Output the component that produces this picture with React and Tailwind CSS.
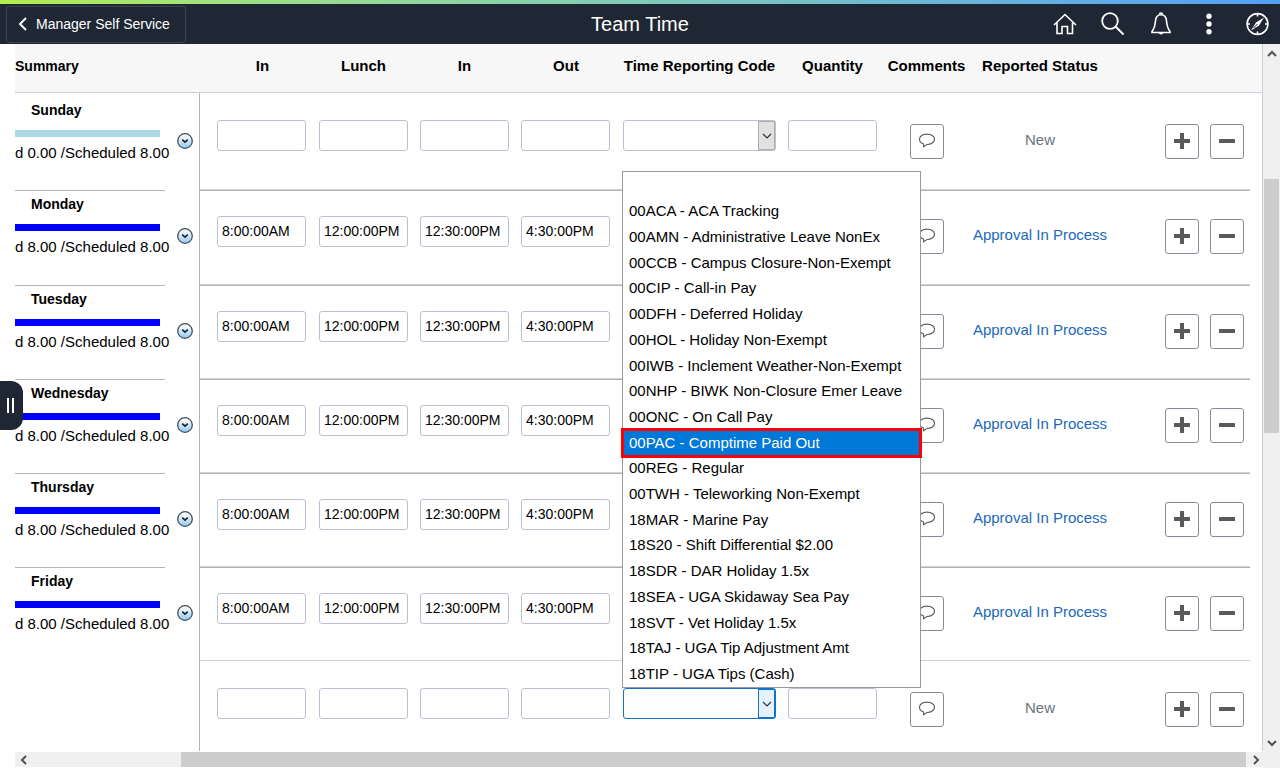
import { useState } from 'react';
import clsx from 'clsx';

const DAYS = [
  { day: 'Sunday', reported: 'd 0.00 /Scheduled 8.00', bar: 'bg-[#add8e6]', height: 'h-[98px]', times: ['', '', '', ''], status: 'New', roomy: true },
  { day: 'Monday', reported: 'd 8.00 /Scheduled 8.00', bar: 'bg-[#0000ff]', height: 'h-[95px]', times: ['8:00:00AM', '12:00:00PM', '12:30:00PM', '4:30:00PM'], status: 'Approval In Process' },
  { day: 'Tuesday', reported: 'd 8.00 /Scheduled 8.00', bar: 'bg-[#0000ff]', height: 'h-[94px]', times: ['8:00:00AM', '12:00:00PM', '12:30:00PM', '4:30:00PM'], status: 'Approval In Process' },
  { day: 'Wednesday', reported: 'd 8.00 /Scheduled 8.00', bar: 'bg-[#0000ff]', height: 'h-[94px]', times: ['8:00:00AM', '12:00:00PM', '12:30:00PM', '4:30:00PM'], status: 'Approval In Process' },
  { day: 'Thursday', reported: 'd 8.00 /Scheduled 8.00', bar: 'bg-[#0000ff]', height: 'h-[94px]', times: ['8:00:00AM', '12:00:00PM', '12:30:00PM', '4:30:00PM'], status: 'Approval In Process' },
  { day: 'Friday', reported: 'd 8.00 /Scheduled 8.00', bar: 'bg-[#0000ff]', height: 'h-[93px]', times: ['8:00:00AM', '12:00:00PM', '12:30:00PM', '4:30:00PM'], status: 'Approval In Process', lastOfWeek: true },
  { day: '', height: 'h-[90px]', times: ['', '', '', ''], status: 'New', roomy: true, open: true },
];

const CODES = [
  '',
  '00ACA - ACA Tracking',
  '00AMN - Administrative Leave NonEx',
  '00CCB - Campus Closure-Non-Exempt',
  '00CIP - Call-in Pay',
  '00DFH - Deferred Holiday',
  '00HOL - Holiday Non-Exempt',
  '00IWB - Inclement Weather-Non-Exempt',
  '00NHP - BIWK Non-Closure Emer Leave',
  '00ONC - On Call Pay',
  '00PAC - Comptime Paid Out',
  '00REG - Regular',
  '00TWH - Teleworking Non-Exempt',
  '18MAR - Marine Pay',
  '18S20 - Shift Differential $2.00',
  '18SDR - DAR Holiday 1.5x',
  '18SEA - UGA Skidaway Sea Pay',
  '18SVT - Vet Holiday 1.5x',
  '18TAJ - UGA Tip Adjustment Amt',
  '18TIP - UGA Tips (Cash)',
];

const PUNCHES = ['In', 'Lunch', 'In', 'Out'];

function Chevron({ className, d, width = 2 }) {
  return (
    <svg className={className} viewBox="0 0 10 10" fill="none" stroke="currentColor" strokeWidth={width}>
      <path d={d} />
    </svg>
  );
}

function TopBar() {
  return (
    <header className="shrink-0">
      <div className="h-1 bg-gradient-to-r from-[#b3ec50] to-[#549ff7]"></div>
      <div className="grid h-10 grid-cols-[1fr_auto_1fr] items-center bg-[#1e2733] text-white">
        <button className="ml-1.5 flex h-[37px] w-[180px] items-center gap-[9px] rounded-[3px] border border-[#3d4651] pl-[11px] text-sm">
          <svg className="h-4 w-[9px]" viewBox="0 0 9 16" fill="none" stroke="currentColor" strokeWidth="2">
            <path d="M8 2 2 8l6 6" />
          </svg>
          Manager Self Service
        </button>
        <h1 className="text-xl">Team Time</h1>
        <nav className="flex items-center justify-end gap-6 pr-[11px]">
          <button aria-label="Home">
            <svg className="size-6" viewBox="0 0 24 24" fill="none" stroke="currentColor" strokeWidth="1.6">
              <path d="M1 13 12 2.500 23 13M4 10.500V21.500h5v-7h5.500v7h5V10.500" />
            </svg>
          </button>
          <button aria-label="Search">
            <svg className="size-6" viewBox="0 0 24 24" fill="none" stroke="currentColor" strokeWidth="1.8">
              <circle cx="9" cy="9" r="7.800" />
              <path d="m14.500 14.500 8 8" strokeWidth="2" />
            </svg>
          </button>
          <button aria-label="Notifications">
            <svg className="size-6" viewBox="0 0 24 24" fill="none" stroke="currentColor" strokeWidth="1.600">
              <path d="M12 2.800c-3.600 0-5.200 2.600-5.500 6-.3 4-.6 7-3.500 10.700V20.500h18v-1c-2.900-3.700-3.200-6.700-3.500-10.700-.3-3.400-1.900-6-5.500-6Z" />
              <path d="M10.500 2.500a1.500 1.500 0 0 1 3 0M10.300 20.500a1.800 1.800 0 0 0 3.400 0" />
            </svg>
          </button>
          <button aria-label="Actions">
            <svg className="size-6" viewBox="0 0 24 24" fill="currentColor">
              <circle cx="12" cy="4.200" r="2.700" />
              <circle cx="12" cy="12" r="2.700" />
              <circle cx="12" cy="19.800" r="2.700" />
            </svg>
          </button>
          <button aria-label="NavBar">
            <svg className="size-6" viewBox="0 0 24 24" fill="none" stroke="currentColor" strokeWidth="1.600">
              <circle cx="12.500" cy="12" r="10.400" />
              <path d="M12.500 2v2.500M12.500 19.500v2.500M2.500 12H5M20 12h2.500" />
              <path d="m19 5.500-5 8L6 18.500l5-8Z" fill="currentColor" stroke="none" />
              <path d="m12.500 12-4 4" stroke="#1e2733" strokeWidth="1" />
            </svg>
          </button>
        </nav>
      </div>
    </header>
  );
}

function TextBox({ label, value }) {
  return (
    <input
      type="text"
      aria-label={label}
      defaultValue={value}
      className="h-[31px] w-[89px] rounded-[3px] border border-[#b9c2ce] bg-white px-1 pb-px text-sm text-black"
    />
  );
}

function CodeSelect({ open }) {
  const [code, setCode] = useState('');

  return (
    <div className="relative w-[153px]">
      <select
        aria-label="Time Reporting Code"
        value={code}
        onChange={(e) => setCode(e.target.value)}
        className={clsx(
          'block h-[31px] w-full appearance-none rounded-[3px] border bg-white px-1 text-sm',
          open ? 'border-[#1a6fc4]' : 'border-[#b9c2ce]'
        )}
      >
        {CODES.map((c) => (
          <option key={c} value={c}>{c}</option>
        ))}
      </select>
      <span
        className={clsx(
          'pointer-events-none absolute inset-y-px right-px flex w-[17px] items-center justify-center border text-[#333]',
          open ? 'border-[#0078d7] bg-[#e5f1fb]' : 'border-[#adadad] bg-[#e1e1e1]'
        )}
      >
        <Chevron className="size-2.5" d="m1 3 4 4 4-4" width={1.2} />
      </span>
      {open && (
        <ul
          role="listbox"
          aria-label="Time Reporting Code options"
          className="absolute bottom-full -left-px z-10 flex h-[517px] w-[299px] flex-col border border-[#999] bg-white pt-px text-[15px]"
        >
          {CODES.map((c) => (
            <li
              key={c}
              role="option"
              aria-selected={c.startsWith('00PAC')}
              onClick={() => setCode(c)}
              className={clsx(
                'flex flex-1 items-center px-1.5 whitespace-nowrap',
                c.startsWith('00PAC') && 'bg-[#0078d7] text-white outline-3 -outline-offset-1 outline-[#ff0000]'
              )}
            >
              {c}
            </li>
          ))}
        </ul>
      )}
    </div>
  );
}

function SquareButton({ label, children }) {
  return (
    <button
      aria-label={label}
      className="flex h-[35px] w-[34px] items-center justify-center rounded-[3px] border border-[#868d96] bg-white pb-px text-[#5a5a5a]"
    >
      {children}
    </button>
  );
}

function DayRow({ row }) {
  const line = row.open
    ? ''
    : row.lastOfWeek
      ? 'border-b border-[#c8cfda]'
      : 'border-b border-[#b4b4b4] shadow-[inset_0_-1px_0_#d0d4da]';
  const fieldPad = row.roomy ? 'pt-[27px]' : 'pt-[25px]';
  const buttonPad = row.roomy ? 'pt-[31px]' : 'pt-7';

  return (
    <tr className={clsx(row.height, 'align-top')}>
      <th
        scope="row"
        className={clsx(
          'text-left font-normal',
          row.roomy ? 'pt-[7px]' : 'pt-[3px]',
          row.day && !row.lastOfWeek && 'border-b border-[#b4b4b4]'
        )}
      >
        {row.day && (
          <>
            <div className="pl-4 text-sm leading-5 font-bold">{row.day}</div>
            <div className={clsx('mt-2.5 h-[7px] w-[145px]', row.bar)}></div>
            <div className="mt-1.5 text-[15px] leading-5 whitespace-nowrap">{row.reported}</div>
          </>
        )}
      </th>
      <td className={clsx('border-r border-[#b4b4b4] pl-3', row.roomy ? 'pt-10' : 'pt-[37px]')}>
        {row.day && (
          <button aria-label={`${row.day} details`} className="block">
            <svg className="size-4" viewBox="0 0 16 16">
              <defs>
                <linearGradient id={`disc-${row.day}`} x1="0" y1="0" x2="0" y2="1">
                  <stop offset="0.2" stopColor="#f4faff" />
                  <stop offset="1" stopColor="#8cc8fa" />
                </linearGradient>
              </defs>
              <circle cx="8" cy="8" r="7.300" fill={`url(#disc-${row.day})`} stroke="#4a4f55" strokeWidth="1.300" />
              <path d="m5.200 6.700 2.800 2.500 2.800-2.500" fill="none" stroke="#222" strokeWidth="1.700" />
            </svg>
          </button>
        )}
      </td>
      {row.times.map((t, i) => (
        <td key={i} className={clsx(line, fieldPad, i === 0 ? 'pl-[17px]' : 'pl-1.5')}>
          <TextBox label={`${row.day} ${PUNCHES[i]}`} value={t} />
        </td>
      ))}
      <td className={clsx(line, fieldPad, 'pl-1.5')}>
        <CodeSelect open={row.open} />
      </td>
      <td className={clsx(line, fieldPad, 'pl-1.5')}>
        <TextBox label={`${row.day} Quantity`} value="" />
      </td>
      <td className={clsx(line, buttonPad, 'pl-[27px]')}>
        <SquareButton label="Comments">
          <svg className="size-4" viewBox="0 0 16 16" fill="none" stroke="currentColor" strokeWidth="1.100">
            <path d="M4.500 11C2.200 10.100.5 8.400.5 6.300.5 3.300 3.800 1.100 8 1.100s7.500 2.200 7.500 5.200-3.300 5.200-7.500 5.200l-3.400 2.300Z" />
          </svg>
        </SquareButton>
      </td>
      <td className={clsx(line, 'text-center text-[15px] leading-5 whitespace-nowrap', row.roomy ? 'pt-[37px]' : 'pt-[34px]')}>
        {row.status === 'New' ? (
          <span className="text-[#6b7480]">New</span>
        ) : (
          <a href="#status" className="text-[#2069b8]">{row.status}</a>
        )}
      </td>
      <td className={clsx(line, buttonPad, 'pr-1.5')}>
        <div className="flex justify-end gap-[11px]">
          <SquareButton label="Add row">
            <svg className="size-4" viewBox="0 0 16 16" fill="currentColor">
              <path d="M6 0h4v6h6v4h-6v6H6v-6H0V6h6z" />
            </svg>
          </SquareButton>
          <SquareButton label="Delete row">
            <svg className="size-4" viewBox="0 0 16 16" fill="currentColor">
              <rect y="6" width="16" height="4" rx="0.500" />
            </svg>
          </SquareButton>
        </div>
      </td>
      <td></td>
    </tr>
  );
}

function TimeGrid() {
  return (
    <table className="w-full table-fixed border-separate border-spacing-0 text-black">
      <colgroup>
        <col className="w-[150px]" />
        <col className="w-[35px]" />
        <col className="w-[113px]" />
        <col className="w-[101px]" />
        <col className="w-[101px]" />
        <col className="w-[102px]" />
        <col className="w-[165px]" />
        <col className="w-[101px]" />
        <col className="w-[87px]" />
        <col className="w-[140px]" />
        <col />
        <col className="w-3" />
      </colgroup>
      <thead>
        <tr className="h-[49px] bg-[#f7f7f7] text-[15px] font-bold whitespace-nowrap *:border-b *:border-[#c8d0d8] *:pb-1">
          <th className="text-left text-sm">Summary</th>
          <th></th>
          <th className="pl-3">In</th>
          <th>Lunch</th>
          <th>In</th>
          <th>Out</th>
          <th>Time Reporting Code</th>
          <th>Quantity</th>
          <th>Comments</th>
          <th>Reported Status</th>
          <th></th>
          <th></th>
        </tr>
      </thead>
      <tbody>
        {DAYS.map((row) => (
          <DayRow key={row.day} row={row} />
        ))}
      </tbody>
    </table>
  );
}

export default function App() {
  return (
    <div className="flex h-screen flex-col overflow-hidden bg-white font-['Liberation_Sans',Arial,sans-serif]">
      <TopBar />
      <main className="relative flex min-h-0 flex-1">
        <button
          aria-label="Show side panel"
          className="absolute top-[337px] left-0 z-20 flex h-[49px] w-[23px] items-center gap-[3px] rounded-r-xl bg-[#1e2733] pl-[7px]"
        >
          <span className="h-[15px] w-0.5 bg-white"></span>
          <span className="h-[15px] w-0.5 bg-white"></span>
        </button>

        <div className="flex min-w-0 flex-1 flex-col pl-[15px]">
          <div className="min-h-0 flex-1 overflow-hidden border-r border-[#c8d0d8]">
            <TimeGrid />
          </div>
          {/* Horizontal scrollbar */}
          <div className="my-px flex h-[15px] shrink-0 items-center bg-[#f0f0f0] text-[#505050]">
            <Chevron className="ml-1 size-2.5" d="M7 1 3 5l4 4" />
            <div className="mr-[5px] ml-[152px] h-full flex-1 bg-[#cdcdcd]"></div>
            <Chevron className="mr-0.5 size-2.5" d="m3 1 4 4-4 4" />
          </div>
        </div>

        {/* Vertical scrollbar */}
        <div className="flex w-[17px] shrink-0 flex-col items-center bg-[#f0f0f0] pb-5 text-[#505050]">
          <Chevron className="mt-[5px] size-2.5" d="M1 7l4-4 4 4" />
          <div className="mt-[120px] h-[254px] w-[15px] bg-[#cdcdcd]"></div>
          <Chevron className="mt-auto size-2.5" d="m1 3 4 4 4-4" />
        </div>
      </main>
    </div>
  );
}
